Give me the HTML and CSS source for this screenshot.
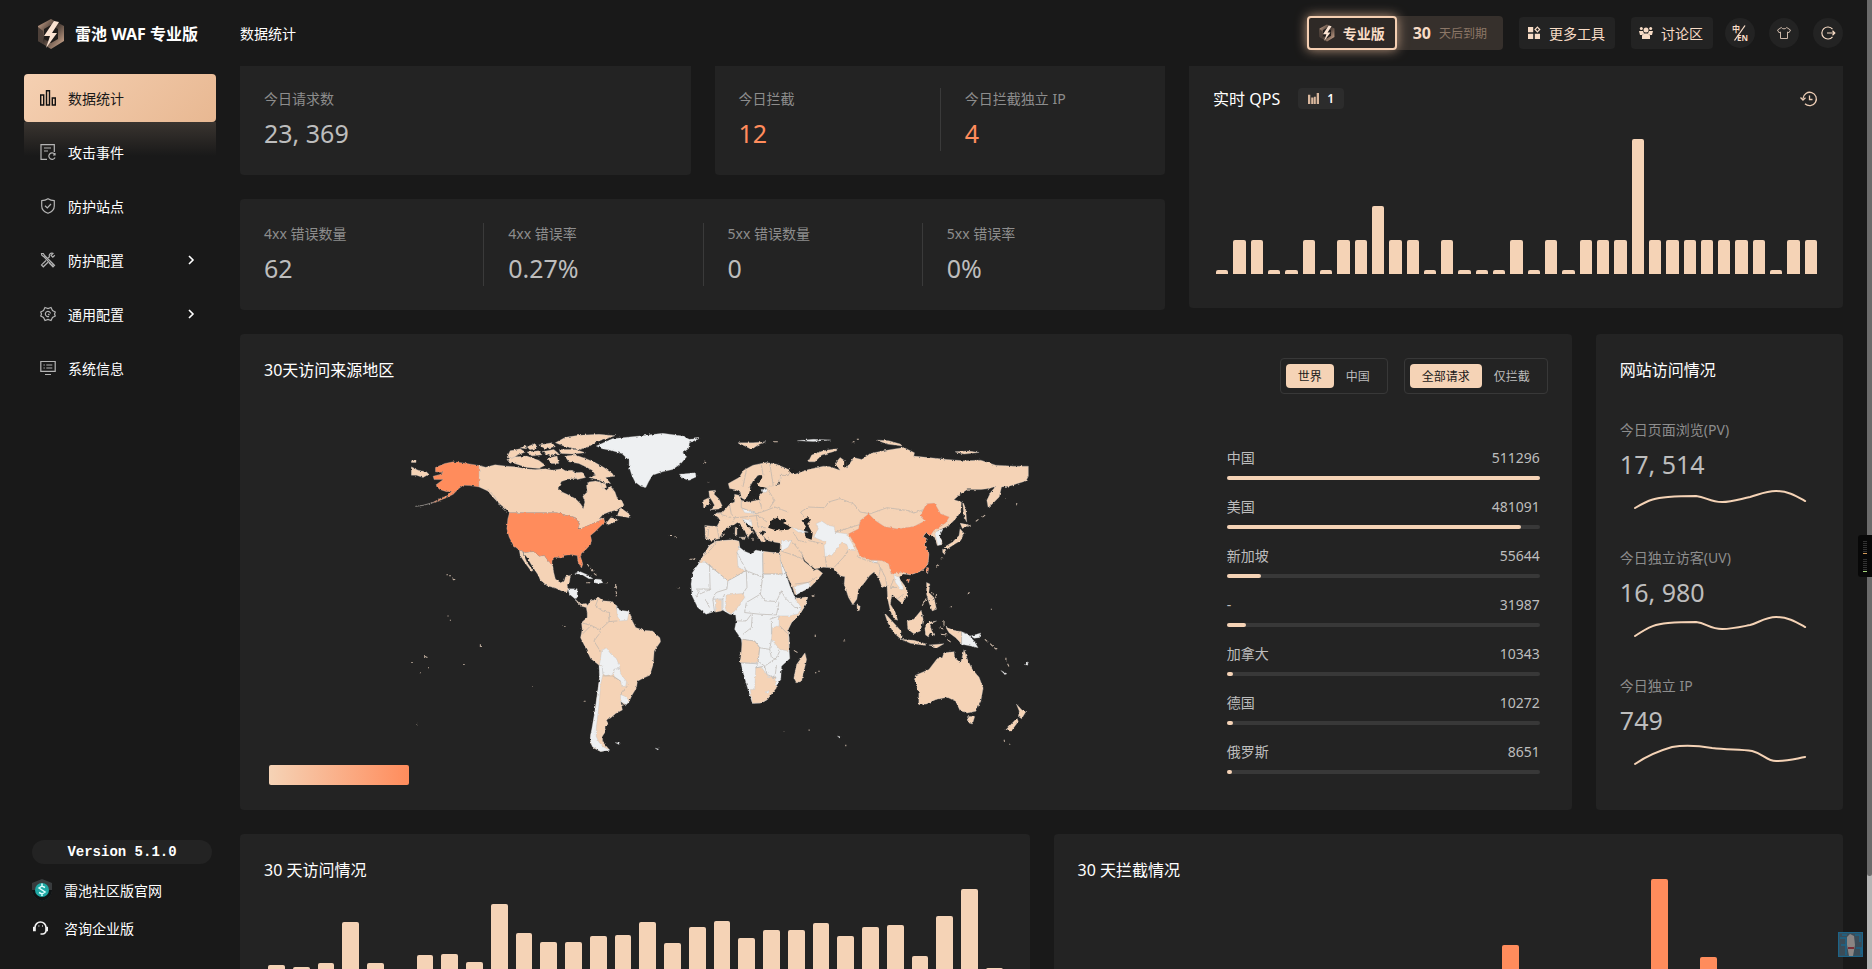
FILE: index.html
```html
<!DOCTYPE html>
<html lang="zh-CN">
<head>
<meta charset="utf-8">
<title>雷池 WAF 专业版</title>
<link rel="stylesheet" href="styles.css">
</head>
<body>
<svg class="defs" aria-hidden="true">
  <defs>
    <linearGradient id="metal" x1="0" y1="0" x2="1" y2="1">
      <stop offset="0" stop-color="#d9b096"/><stop offset=".45" stop-color="#3a302b"/><stop offset="1" stop-color="#e3b99d"/>
    </linearGradient>
    <symbol id="logo" viewBox="0 0 28 32">
      <path d="M14 1 27 8v15L14 31 1 23V8z" fill="url(#metal)"/>
      <path d="M14 7 21 11v10l-7 4-7-4V11z" fill="#211d1b"/>
      <path d="M1 9v14l5 3V13z" fill="#4d4039"/>
      <path d="M17 3 7 18h6L9 30l11-15h-5l7-11z" fill="#fbe3d2"/>
    </symbol>
    <symbol id="chevron" viewBox="0 0 8 10"><path d="M2 1l4 4-4 4" fill="none" stroke="#fff" stroke-width="1.6"/></symbol>
  </defs>
</svg>
<div class="app">
  <aside class="sidebar">
    <div class="brand"><svg class="brand-logo"><use href="#logo"/></svg><h1>雷池 WAF 专业版</h1></div>
    <nav class="nav">
      <a href="#stats" class="nav-item active">
        <svg viewBox="0 0 16 16"><path d="M.7 5h3v10h-3zM6.5.8h3v14.2h-3zM12.3 8h3v7h-3z"/></svg><span>数据统计</span></a>
      <a href="#events" class="nav-item">
        <svg viewBox="0 0 16 16"><path d="M7 15.3H1V.7h13.3V8M4 4h7M4 7h4M14.6 10.2a3.2 3.2 0 1 0 .4 3.2M15 9v2h-2"/></svg><span>攻击事件</span></a>
      <a href="#sites" class="nav-item">
        <svg viewBox="0 0 16 16"><path d="M8 .8c2 1.3 4 1.8 6.3 1.9V8c0 3.600-2.800 6-6.300 7.300C4.500 14 1.700 11.600 1.700 8V2.700C4 2.600 6 2.100 8 .8zM5 7.700l2.300 2.200L11 6"/></svg><span>防护站点</span></a>
      <a href="#rules" class="nav-item">
        <svg viewBox="0 0 16 16"><path d="M1.500 1.500l1.800 0 1.500 2.300 8.700 8.400-1.300 1.500-8.400-9-2-1.500zM14.800 3.200l-2 1.900-1.700-1.700 1.800-2C10.600.6 8.700 2.500 9.400 4.800l-2 2M6 8.500l-4.500 4.400 1.800 1.900L8 10.300M10.500 9.500l4 3.800-1.500 1.500-4-4"/></svg><span>防护配置</span><svg class="chev"><use href="#chevron"/></svg></a>
      <a href="#general" class="nav-item">
        <svg viewBox="0 0 16 16"><path d="M5 1.500l3 1 3-1 1.500 3L15.300 6 14.500 8l.8 2-2.800 1.500-1.500 3-3-1-3 1-1.500-3L.7 10l.8-2-.8-2 2.800-1.500z"/><path d="M10.500 7.500A2.600 2.600 0 1 0 9 10.400M8 8l1.500 1"/></svg><span>通用配置</span><svg class="chev"><use href="#chevron"/></svg></a>
      <a href="#system" class="nav-item">
        <svg viewBox="0 0 16 16"><path d="M.8 1.500h14.400v9.800H.8zM5 14.500h6M3.500 5h1.300M6.300 5h6M3.500 8h1.300M6.300 8h6"/></svg><span>系统信息</span></a>
    </nav>
    <div class="side-foot">
      <div class="version">Version 5.1.0</div>
      <a href="#home" class="foot-link">
        <svg viewBox="0 0 20 22"><path d="M10 0l10 4v7c0 5-4 9-10 11C4 20 0 16 0 11V4z" fill="#383b3d"/><path d="M10 22C4 20 0 16 0 11l20 0c0 5-4 9-10 11z" fill="#101314"/><circle cx="10" cy="11" r="7" fill="#1fa8a4"/><path d="M13 8.500 10 7 7 9l6 4-3 2-3-1.500M10 4.500V7M10 15v2" fill="none" stroke="#dff" stroke-width="1.500"/></svg><span>雷池社区版官网</span></a>
      <a href="#consult" class="foot-link">
        <svg viewBox="0 0 20 22"><path d="M3 10.500a5.500 5.500 0 0 1 11 0v2.500a3.500 3.500 0 0 1-4 4H8.500M3 10v3.500H1.800V10.500zM14 10v3.500h1.200V10.500zM6.500 9h.8M10 9h.8" fill="none" stroke="#f2f2f2" stroke-width="1.600"/></svg><span>咨询企业版</span></a>
    </div>
  </aside>

  <div class="page">
    <header class="topbar">
      <h2 class="crumb">数据统计</h2>
      <div class="tools">
        <div class="license">
          <button class="edition"><svg><use href="#logo"/></svg>专业版</button>
          <span class="expire"><b>30</b><span>天后到期</span></span>
        </div>
        <button class="tool"><svg viewBox="0 0 14 14"><path d="M1 1h5.200v5.200H1zM1 7.800h5.200V13H1zM7.800 7.800H13V13H7.800z" fill="#f8dcc6"/><path d="M10.400 1.200l2.300 2.300-2.300 2.300-2.300-2.300z" fill="none" stroke="#f8dcc6" stroke-width="1.200"/></svg>更多工具</button>
        <button class="tool"><svg viewBox="0 0 14 14" fill="#f8dcc6"><circle cx="7" cy="4" r="2.500"/><circle cx="2.300" cy="2.500" r="1.500"/><circle cx="11.700" cy="2.500" r="1.500"/><path d="M0 5h4l1 2.500-2 1.500H1zM14 5h-4L9 7.500l2 1.500h2zM3 13V9.500L5 7.500h4l2 2V13z"/></svg>讨论区</button>
        <div class="rounds">
          <button class="round" aria-label="语言"><svg viewBox="0 0 18 18"><text class="lang-zh" x="1" y="8">中</text><text class="lang-en" x="6" y="17">EN</text><path d="M14 1.500 3.500 16.500" stroke="#f8dcc6" stroke-width="1.300"/></svg></button>
          <button class="round" aria-label="主题"><svg viewBox="0 0 18 18"><path d="M6.300 3.500 2.500 6l1.500 2.700 1.500-.7v6.500h7V8l1.500.7L15.500 6l-3.800-2.500c-1 1.800-4.400 1.800-5.400 0z" fill="none" stroke="#cdb9aa"/></svg></button>
          <button class="round" aria-label="退出"><svg viewBox="0 0 18 18"><path d="M13.500 5.200a6 6 0 1 0 0 7.600M8 9h7.500M13.500 6.800 15.800 9l-2.300 2.200" fill="none" stroke="#f8dcc6" stroke-width="1.200"/></svg></button>
        </div>
      </div>
    </header>

    <main class="grid">
      <section class="overview">
        <div class="card top stats"><div class="stat"><h3>今日请求数</h3><p>23, 369</p></div></div>
        <div class="card top stats hot">
          <div class="stat"><h3>今日拦截</h3><p>12</p></div>
          <div class="stat"><h3>今日拦截独立 IP</h3><p>4</p></div>
        </div>
        <div class="card stats wide">
          <div class="stat"><h3>4xx 错误数量</h3><p>62</p></div>
          <div class="stat"><h3>4xx 错误率</h3><p>0.27%</p></div>
          <div class="stat"><h3>5xx 错误数量</h3><p>0</p></div>
          <div class="stat"><h3>5xx 错误率</h3><p>0%</p></div>
        </div>
      </section>

      <section class="card top qps">
        <div class="qps-head">
          <h3 class="title">实时 QPS</h3>
          <span class="chip"><svg viewBox="0 0 12 12"><path d="M0 2h2.500v10H0zM3.500 5H6v7H3.500zM6.500 4H8.500v8h-2zM9.500 0H12v12H9.500z" fill="#d9b79d"/></svg>1</span>
          <button class="history" aria-label="历史"><svg viewBox="0 0 20 20"><path d="M4 9.500a6.700 6.700 0 1 1 2 5.300M1.500 8.500l2.500 2.500L6.500 8.800M10.500 6.500v4h3" fill="none" stroke="#ecccb4" stroke-width="1.300"/></svg></button>
        </div>
        <div class="bars qps-bars" id="qps"></div>
      </section>

      <section class="card region">
        <div class="region-head">
          <h3 class="title">30天访问来源地区</h3>
          <div class="segment"><button class="on">世界</button><button>中国</button></div>
          <div class="segment"><button class="on">全部请求</button><button>仅拦截</button></div>
        </div>
        <div class="region-body">
          <figure class="map">
            <svg viewBox="36 36 1853 956" role="img" aria-label="世界地图">
              <filter id="coast" x="0" y="0" width="1" height="1"><feTurbulence type="fractalNoise" baseFrequency=".12" numOctaves="2" seed="4"/><feDisplacementMap in="SourceGraphic" scale="8" xChannelSelector="R" yChannelSelector="G"/></filter>
              <g filter="url(#coast)">
              <!-- Americas -->
              <g class="land">
                <path d="M242 136 262 141 290 134 325 138 350 140 380 146 410 148 440 146 462 150 490 146 500 152 520 150 540 162 535 175 510 176 488 184 478 205 490 215 505 222 530 235 545 250 553 262 558 245 552 228 565 215 563 195 570 185 590 182 605 186 612 200 622 210 635 198 648 215 655 235 668 240 675 255 655 268 630 275 612 282 600 296 615 290 615 300 600 302 580 310 545 325 538 322 542 310 530 292 500 284 478 277 333 277 325 268 305 252 288 235 268 212 242 200z"/>
                <path d="M665 262 678 272 690 280 690 292 672 288 655 286 660 272zM622 308 635 292 650 295 658 298 640 308 625 314z"/>
                <path d="M498 108 530 105 560 115 590 128 615 142 640 160 645 168 620 172 635 190 620 188 595 178 570 172 590 165 580 150 560 140 540 130 510 125z"/>
                <path d="M470 68 500 52 540 46 600 43 648 47 620 56 590 66 570 80 545 88 520 84 495 78zM325 118 350 110 385 108 420 120 440 135 420 145 385 142 355 132 330 124zM325 112 335 92 365 86 380 96 355 106 340 116zM385 80 410 70 415 84 395 90zM420 75 460 68 470 80 440 86zM430 95 465 88 480 100 455 108zM482 88 530 88 560 98 520 102 485 100zM446 114 475 108 480 130 458 130zM385 96 420 92 430 104 400 108zM365 84 382 76 384 86zM527 158 550 156 560 172 535 178zM605 188l14 2 4 12-12 4z"/>
                <path d="M362 388 380 396 405 393 422 407 437 405 448 420 462 432 465 455 470 475 485 486 497 480 500 468 515 463 512 485 505 492 508 505 505 514 492 512 470 502 445 495 425 478 418 462 400 435 385 410 372 395 385 425 403 450 398 452 378 425 365 405zM530 535 545 550 562 548 568 556 562 560 548 556 535 545z"/>
                <path d="M562 560 575 540 590 535 597 528 612 540 640 542 652 555 655 570 680 570 692 575 700 600 710 620 735 628 760 630 782 650 784 662 765 690 762 730 752 762 735 770 715 780 712 800 700 820 688 845 675 850 665 840 668 855 670 866 650 876 640 885 635 890 622 895 628 908 618 915 620 930 610 945 612 962 632 985 605 990 585 980 575 965 575 940 582 915 588 870 595 820 602 770 604 735 575 712 560 680 545 650 550 625 548 605 565 590 565 575z"/>
                <path d="M40 140 60 150 85 155 92 162 75 172 55 165 40 165zM40 122h14v5H40z"/>
              </g>
              <g class="hot-land">
                <path d="M112 142 140 130 165 125 200 129 242 136 242 200 215 196 195 195 182 205 165 222 145 232 120 242 97 250 125 235 150 225 160 212 145 214 125 208 112 195 125 185 135 178 108 178 105 168 125 163 135 158 112 155z"/>
                <path d="M333 277 478 277 500 284 530 292 542 310 538 325 545 325 580 310 600 302 612 290 618 305 600 322 590 332 575 345 578 360 575 372 560 388 548 398 545 408 552 430 548 442 538 425 535 405 515 402 495 405 490 412 470 410 460 420 460 432 448 420 437 405 422 407 405 393 380 396 362 388 345 375 332 350 325 325 328 295z"/>
              </g>
              <g class="none">
                <path d="M592 78 640 56 720 48 790 40 850 48 870 58 902 55 870 68 868 85 850 98 862 110 845 130 820 148 790 155 760 165 748 185 740 202 725 198 708 185 698 165 690 140 690 120 668 100 640 92 610 86zM840 162 865 160 888 158 890 170 868 180 850 174z"/>
                <path d="M507 504 535 504 535 530 530 535 512 520zM528 458 545 453 565 462 582 474 570 474 550 462zM588 475 605 476 612 486 598 488 588 486z"/>
                <path d="M600 732 610 735 612 760 605 790 602 830 598 870 592 920 592 945 600 962 612 975 632 986 605 990 580 975 574 950 580 915 588 870 595 820 602 770zM608 690 622 680 635 698 652 712 662 735 662 742 645 744 642 758 620 764 612 758 610 735 602 730zM645 745 662 742 665 758 682 780 680 795 668 796 665 780 645 765zM665 820 680 826 690 838 682 850 664 840zM652 553 662 568 690 572 685 598 662 600 655 585zM650 964h14l-4 5zM768 980l10 2-2 3z"/>
              </g>
              <path class="line" d="M597 535 590 555 610 570 632 575 630 602M548 605 580 615 600 625M604 690 585 660 600 640 605 625 630 602 655 600M612 764 640 764 665 780M688 790 665 820M550 640 575 615M268 206 290 230 300 252 325 276M52 258 75 255 100 248"/>
              <path class="specks" d="M145 462h4M153 465h5M163 474l5 4M565 430l6 8M575 442l8 10M585 458l8 6M650 490v14M652 512v14M492 613l8 4M620 486h6M565 486h6M78 705l10 4M246 670v8M40 724h4M195 730h4M65 755h3M90 740h4M402 796h3M556 840h4M56 908l5 4M812 345h6M826 348l6 4M870 416h20M833 500l8 2M148 585h3M155 598h3M915 125l5 4M925 186h4"/>

              <!-- Eurasia, Africa and Oceania -->
              <g transform="translate(840)">
                <g class="land">
                  <path d="M88 212 108 210 104 222 118 235 128 256 118 266 92 268 105 255 98 242 90 230zM72 240 88 232 90 252 72 262z"/>
                  <path d="M146 190 178 172 192 150 220 135 260 127 290 132 335 152 325 165 300 165 312 175 278 202 258 204 235 198 228 190 235 175 250 168 235 165 220 182 210 200 215 210 205 225 195 238 185 232 182 215 165 208 150 205z"/>
                  <path d="M76 315 112 318 122 300 115 290 102 285 112 278 130 275 150 252 165 245 165 222 178 225 185 240 205 245 240 238 240 222 262 205 258 202 300 192 302 165 325 165 330 158 345 162 385 148 430 138 450 140 480 150 465 130 480 112 498 125 500 145 520 112 545 118 570 100 610 92 670 82 702 98 700 108 800 118 850 122 900 120 945 135 1000 138 1042 138 1042 168 1035 182 1010 190 985 198 962 200 955 230 935 250 922 262 918 240 930 215 945 198 925 205 900 208 860 208 840 220 820 238 842 245 840 275 825 295 805 315 785 325 770 332 775 345 783 358 785 372 770 375 762 350 750 345 735 338 728 348 740 356 732 375 745 400 742 430 725 450 690 462 668 460 655 470 680 505 680 525 665 548 650 535 635 520 630 550 645 575 652 598 642 595 630 570 622 535 620 495 605 500 595 470 580 455 568 465 550 490 535 505 530 535 518 552 505 530 492 490 494 468 480 465 460 442 430 440 405 445 375 420 366 402 372 422 395 440 400 450 412 445 428 458 410 480 390 500 360 515 345 522 338 500 315 450 300 415 300 395 302 368 285 365 262 360 250 345 258 332 245 330 240 340 252 348 258 362 245 364 235 350 225 330 200 305 190 298 198 312 222 335 210 342 205 352 195 330 175 305 165 312 145 318 130 335 118 355 95 360 78 355zM530 552 540 556 538 568 532 570z"/>
                  <path d="M385 125 395 105 430 92 470 86 470 92 425 105 405 125zM175 68 220 68 258 65 240 72 215 88 200 80zM588 60 625 62 660 72 665 78 620 72zM820 95 860 93 895 97 850 102zM167 320l5 2v22l-6-2zM178 350h20l-4 8z"/>
                  <path d="M838 325 850 338 840 360 820 372 800 385 790 380 815 365 835 345zM838 308 865 314 845 324zM786 385 796 390 792 402 786 395zM845 240 855 265 858 305 850 290zM738 485 748 490 745 515 760 530 768 565 755 570 745 545 738 520z"/>
                  <path d="M612 575 635 600 662 630 662 655 640 635 622 605zM662 655 700 658 735 668 735 673 690 667zM680 600 700 595 722 568 728 595 720 630 700 638 682 625zM733 622 742 604 768 600 748 610 753 628 762 644 749 634 744 648 735 642zM795 618 820 628 843 632 843 670 825 650 805 635zM745 672 790 668 770 680z"/>
                  <path d="M702 775 705 762 745 745 770 712 785 710 790 695 820 692 822 710 840 725 850 685 862 720 875 745 895 768 907 800 900 840 885 870 860 875 838 868 825 840 800 828 765 835 738 848 715 850 715 815zM860 885 882 885 875 908 865 905zM1006 848 1022 865 1034 872 1022 892 1012 885 1015 870zM1008 890 1012 900 990 930 975 925z"/>
                </g>
                <path class="sea" d="M265 322 275 300 292 290 300 300 312 295 320 302 310 308 335 320 325 328 290 330zM365 300 385 290 393 298 382 310 398 340 395 358 378 352 372 328 378 318zM212 204 225 188 238 165 250 165 245 178 232 190 240 200 260 200 238 206 235 218 205 235zM328 146 350 152 345 160 330 158zM492 122 500 118 500 140 492 142z"/>
                <path class="none" d="M110 362 160 358 178 362 180 380 195 392 215 400 228 388 260 395 298 398 302 420 315 450 330 495 345 530 362 535 383 528 378 550 360 580 335 605 325 625 328 650 328 690 330 712 305 735 303 775 285 800 262 835 245 845 218 846 205 805 192 760 182 720 190 690 185 655 165 625 170 600 168 582 150 580 130 568 105 572 80 580 55 560 38 525 35 490 40 455 60 425 72 405 90 375z"/>
                <g class="land">
                  <path d="M110 362 160 358 178 362 180 378 172 395 175 440 200 450 145 480 78 425 60 425 72 405 90 375zM250 392 298 398 308 460 250 460zM140 522 190 518 195 530 170 565 155 580 138 568zM108 538H126V570L108 574z"/>
                  <path d="M345 533 383 528 378 550 358 582 335 605 325 625 328 690 300 685 275 655 278 620 298 615 298 585 330 585 355 578 365 560zM188 655 225 660 240 680 235 725 182 725zM218 846 212 805 225 805 228 740 245 738 265 765 285 770 290 800 262 835 245 845zM375 695 380 715 365 780 350 785 342 770 350 730z"/>
                </g>
                <g class="none">
                  <path d="M342 498 385 485 392 498 350 522zM305 362 335 360 325 380 305 392zM408 310 425 302 445 315 462 318 465 335 500 340 520 375 525 390 505 388 500 372 485 365 470 385 455 405 435 408 432 375 440 365 400 350 415 325zM188 265 215 272 230 280 195 277zM188 295 215 300 218 318 205 312zM335 320 385 335 355 335zM244 208 262 208 260 216 246 216zM762 335 788 325 777 345 783 372 772 374zM640 462 655 470 670 505 662 508 645 485zM578 420 592 420 590 426 578 426zM258 812 268 808 266 818z"/>
                  <path d="M843 632 862 640 880 660 892 680 870 675 843 670zM870 645 900 636 895 650 880 652zM352 62 400 58 452 60 400 64zM960 748 978 758 972 760zM1030 730 1042 722 1040 732zM472 944l10 2-2 4z"/>
                </g>
                <path class="hot-land" d="M505 340 535 325 540 300 565 280 585 300 612 318 650 325 700 318 735 300 720 285 728 268 738 250 762 248 780 280 806 290 795 308 780 318 760 330 750 345 735 338 728 348 740 356 732 375 745 400 742 430 725 450 690 462 668 455 632 460 625 430 605 420 570 418 540 408 530 385 520 365zM738 440 745 442 741 460zM677 478 688 475 684 487z"/>
                <path class="line" d="M362 275 385 260 435 262 445 245 480 235 520 250 540 275 570 280 620 262 680 270 700 278 728 268M362 275 372 290M465 335 520 318 540 312M340 335 355 360 380 365M335 360 370 405M330 400 370 415M345 490 385 485 410 470M305 392 330 400M385 360 430 370M435 408 440 440M462 440 490 410 505 388M530 408 560 420 595 428M595 470 600 445 595 428M620 495 615 470 600 440M630 500 650 500M650 535 670 520M640 475 630 500M150 252 155 280 165 292 190 290 235 285M185 240 185 262 230 280 260 270 285 260 325 275M240 238 245 262M262 205 285 240 270 262M165 292 160 305M112 318 118 350M88 320 85 355M112 278 155 292M230 285 235 320 258 322M200 150 190 200M245 135 250 165M270 128 280 195M235 285 262 305"/>
                <path class="line" d="M90 430 92 505 50 505M78 425 145 480 142 505 110 515 100 535 130 535M145 480 200 450 202 500 190 518M172 395 200 450M200 450 250 470 248 395M250 460 242 520 200 545 195 575M250 460H310M242 520 255 540 290 542 305 510M305 510 315 530 345 560 362 560M195 575 240 580 290 582 298 542M168 600 200 600 215 580M190 640 215 620 218 580M190 655 225 660 240 680 270 685 275 655M275 600 275 640M298 585 270 595M240 680 235 720 255 735 290 710 300 690M270 685 275 710 290 715M182 725 235 728 228 740M228 740 255 735 262 760 285 770 290 735M60 510 50 530M78 535 90 560M100 535 105 572M130 535 130 568M135 520 130 535M95 505 60 520M325 640 300 615M112 362 95 385 75 405"/>
                <path class="specks" d="M860 318l10-4M885 303l8-6M905 290l8-6M970 236h4M1005 250h4M785 410l-4 6M775 432l-8 8M752 515l8 6M750 530l6 10M768 520l-3 12M725 555l12-22M790 600v14M775 620l14 4M780 640l20 2M800 655l10 8M912 655l10 8M928 668l8 8M940 680l8 6M975 710v8M980 728l4 8M280 65h14M515 65h8M530 58h6M405 755h4M415 750h4M312 930h3M386 926h3M497 970v4M970 955v4M985 968h3M342 688l10 6M395 525h8M810 558h4M862 520l4-6M930 565h3M490 660h5M404 643h4M125 350l10-10M265 348l4 12M220 352v10"/>
              </g>
              </g>
            </svg>
            <div class="legend"></div>
          </figure>
          <ul class="rank">
            <li><span>中国</span><span>511296</span><div class="track"><i style="width:100%"></i></div></li>
            <li><span>美国</span><span>481091</span><div class="track"><i style="width:94%"></i></div></li>
            <li><span>新加坡</span><span>55644</span><div class="track"><i style="width:11%"></i></div></li>
            <li><span>-</span><span>31987</span><div class="track"><i style="width:6%"></i></div></li>
            <li><span>加拿大</span><span>10343</span><div class="track"><i style="width:2%"></i></div></li>
            <li><span>德国</span><span>10272</span><div class="track"><i style="width:2%"></i></div></li>
            <li><span>俄罗斯</span><span>8651</span><div class="track"><i style="width:1.6%"></i></div></li>
          </ul>
        </div>
      </section>

      <section class="card visits">
        <h3 class="title">网站访问情况</h3>
        <div class="stat"><h3>今日页面浏览(PV)</h3><p>17, 514</p>
          <svg viewBox="0 0 199 28"><path d="M15 22C30 13 36 12 48 11 60 10 66 10 76 10 86 11 90 16 102 16 112 16 120 13 130 11 138 9 145 5 156 5 168 5 176 10 185 15"/></svg></div>
        <div class="stat"><h3>今日独立访客(UV)</h3><p>16, 980</p>
          <svg viewBox="0 0 199 28"><path d="M15 22C30 12 36 10 48 9 60 8 66 8 76 8 86 9 90 15 102 15 112 15 120 13 130 11 138 9 145 3 156 3 168 3 176 8 185 13"/></svg></div>
        <div class="stat"><h3>今日独立 IP</h3><p>749</p>
          <svg viewBox="0 0 199 28"><path d="M15 22C28 13 38 9 52 5 64 3 80 4 92 6 108 8 120 7 132 9 144 12 146 19 156 19 168 19 174 17 185 15"/></svg></div>
      </section>

      <section class="card half"><h3 class="title">30 天访问情况</h3><div class="bars day-bars" id="visits"></div></section>
      <section class="card half"><h3 class="title">30 天拦截情况</h3><div class="bars day-bars blocked" id="blocked"></div></section>
    </main>
  </div>
</div>
<div class="scrollbar"><i></i></div>
<div class="meter"><i></i><i class="up"></i><i></i><i class="down"></i></div>
<div class="pet"><svg viewBox="0 0 25 25"><path d="M0 0h25v25H0z" fill="#3a4c58"/><path d="M.5.5h24v24H.5zM2 6h6v17M3 13h5M17 3h5v7M18 16h5v7M4 3h5" fill="none" stroke="#1d6488" stroke-width="1.500"/><path d="M9 5l3-3 4 2 1 9-2 11h-4L9 13z" fill="#8a8583"/><path d="M10 15h6v2h-6z" fill="#7a2e36"/></svg></div>
<script src="charts.js"></script>
</body>
</html>
```
FILE: styles.css
```css
* { box-sizing: border-box; }
body {
  margin: 0; height: 100vh; overflow: hidden; background: #191919; color: #fff;
  font: 14px/21px "Noto Sans", "Noto Sans CJK SC", sans-serif;
}
h1, h2, h3, p, ul, figure { margin: 0; padding: 0; font-weight: 400; }
ul { list-style: none; }
a { color: inherit; text-decoration: none; }
button { border: 0; padding: 0; background: none; color: inherit; font: inherit; display: flex; align-items: center; }
.defs { position: absolute; width: 0; height: 0; }
.app { display: flex; height: 100vh; overflow: hidden; }

.sidebar { width: 240px; flex: none; padding: 0 24px; display: flex; flex-direction: column; }
.brand { display: flex; align-items: center; gap: 10px; height: 74px; padding: 0 0 6px 13px; white-space: nowrap; }
.brand-logo { width: 28px; height: 32px; flex: none; }
.brand h1 { font-size: 16px; line-height: 24px; font-weight: 700; }
.nav { display: flex; flex-direction: column; gap: 6px; }
.nav-item { display: flex; align-items: center; gap: 12px; height: 48px; padding: 0 21px 0 16px; border-radius: 4px; position: relative; }
.nav-item > svg:first-child { width: 16px; height: 16px; fill: none; stroke: #b4b4b4; stroke-width: 1.2; }
.nav-item .chev { width: 8px; height: 10px; margin-left: auto; }
.nav-item.active { color: #191919; background: linear-gradient(135deg, #f5d0b2, #e8b892); }
.nav-item.active > svg:first-child { stroke: #111; stroke-width: 1.4; }
.nav-item.active::after {
  content: ""; position: absolute; left: 0; right: 0; top: 48px; height: 34px;
  background: linear-gradient(rgba(245, 208, 178, .15), rgba(245, 208, 178, 0));
}
.side-foot { margin-top: auto; padding-bottom: 30px; }
.version {
  height: 24px; margin: 0 4px 0 8px; border-radius: 12px; background: #232323; text-align: center;
  font: 700 14px/24px "Liberation Mono", monospace;
}
.foot-link { display: flex; align-items: center; gap: 12px; margin: 15px 0 0 8px; height: 22px; }
.foot-link + .foot-link { margin-top: 16px; }
.foot-link svg { width: 20px; height: 22px; }

.page { flex: 1; min-width: 0; padding-right: 29px; }
.topbar { height: 66px; display: flex; align-items: center; justify-content: space-between; }
.crumb { font-size: 14px; }
.tools { display: flex; align-items: center; gap: 16px; color: #f8dcc6; }
.license { display: flex; height: 34px; background: #36302c; border-radius: 4px; }
.edition {
  gap: 8px; padding: 0 10px; font-weight: 700; border: 2px solid #f5cfb2; border-radius: 4px;
  background: #2e2926; box-shadow: 0 0 12px rgba(255, 205, 170, .7);
}
.edition svg { width: 16px; height: 20px; }
.expire { display: flex; align-items: center; gap: 8px; padding: 0 16px; color: #8c7767; font-size: 12px; }
.expire b { font-size: 16px; color: #f8dcc6; }
.tool { height: 32px; gap: 8px; padding: 0 10px 0 8px; background: #232323; border-radius: 4px; }
.tool svg { width: 14px; height: 14px; }
.rounds { display: flex; gap: 14px; margin-left: -4px; }
.round { width: 30px; height: 30px; justify-content: center; border-radius: 50%; background: #232323; }
.round svg { width: 18px; height: 18px; }
.lang-zh, .lang-en { font-size: 8px; font-weight: 700; fill: #f8dcc6; }

.grid { display: grid; grid-template-columns: repeat(12, 1fr); gap: 24px; align-items: start; }
.card { background: #232323; border-radius: 4px; padding: 24px; min-width: 0; }
.card.top { padding-top: 22px; border-radius: 0 0 4px 4px; }
.title { font-size: 16px; line-height: 24px; }
.overview { grid-column: span 7; display: grid; grid-template-columns: 1fr 1fr; gap: 24px; }
.wide { grid-column: span 2; }
.stats { display: grid; grid-auto-flow: column; grid-auto-columns: 1fr; }
.stats .stat + .stat { border-left: 1px solid #3a3a3a; padding-left: 24px; }
.stat h3 { font-size: 14px; line-height: 21px; color: #8d8d8d; }
.stat p { font-size: 25px; line-height: 36px; padding-top: 6px; color: #bdbdbd; }
.hot p { color: #ff8c5c; }

.qps { grid-column: span 5; }
.qps.card { padding-bottom: 34px; }
.qps-head { display: flex; align-items: center; height: 21px; }
.chip { display: flex; align-items: center; gap: 8px; height: 21px; margin-left: 18px; padding: 0 10px; background: #2c2c2c; border-radius: 4px; font-size: 12px; font-weight: 600; }
.chip svg { width: 11px; height: 11px; }
.history { margin-left: auto; }
.history svg { width: 20px; height: 20px; }
.bars { display: flex; align-items: flex-end; }
.bars i { flex: 1; background: #f5d3b6; border-radius: 2px 2px 0 0; }
.qps-bars { height: 165px; gap: 5px; padding: 0 2px 0 3px; }

.region { grid-column: span 10; }
.region-head { display: flex; gap: 16px; height: 36px; }
.region-head .title { margin-right: auto; }
.segment { display: flex; padding: 5px; border: 1px solid #383838; border-radius: 4px; }
.segment button { height: 24px; padding: 0 12px; border-radius: 4px; font-size: 12px; color: #bdbdbd; }
.segment .on { background: #f5d3b6; color: #191919; }
.region-body { display: flex; gap: 50px; height: 392px; }
.map { flex: 1; display: flex; flex-direction: column; padding-top: 38px; }
.map svg { width: 68%; align-self: center; display: block; }
.land, .none, .hot-land { stroke: #bcbcbc; stroke-width: 1; }
.land { fill: #f5d3b6; }
.hot-land { fill: #ff8c5c; }
.none { fill: #eef0f2; }
.sea { fill: #232323; }
.line { fill: none; stroke: #b9b3ad; stroke-width: 2; }
.specks { fill: none; stroke: #cdb9a8; stroke-width: 3; }
.legend { width: 140px; height: 20px; margin: auto 0 1px 5px; border-radius: 2px; background: linear-gradient(90deg, #f5d3b6, #ff8c5c); }
.rank { width: 313px; margin: 53px 8px 0 0; display: flex; flex-direction: column; gap: 16px; color: #bdbdbd; }
.rank li { display: flex; flex-wrap: wrap; justify-content: space-between; row-gap: 8px; }
.track { width: 100%; height: 4px; border-radius: 2px; background: #383838; }
.track i { display: block; height: 4px; border-radius: 2px; background: #f5d3b6; }

.visits { grid-column: span 2; align-self: stretch; }
.visits .title { margin-bottom: 37px; }
.visits .stat + .stat { margin-top: 33px; }
.visits .stat svg { display: block; width: 100%; margin-top: 4px; fill: none; stroke: #f5d3b6; stroke-width: 2; stroke-linecap: round; }

.half { grid-column: span 6; }
.day-bars { height: 168px; gap: 8px; padding: 0 3px 0 4px; }
.blocked i { background: #ff8c5c; }

.scrollbar { position: absolute; right: 0; top: 0; width: 5px; height: 100vh; background: #b5b5b5; }
.scrollbar i { display: block; height: 876px; background: #6b6b6b; border-radius: 0 0 3px 3px; }
.meter { position: absolute; right: 0; top: 535px; width: 14px; height: 42px; padding: 6px 5px; background: #080808; border-radius: 3px 0 0 3px; }
.meter i { display: block; width: 4px; height: 12px; background: repeating-linear-gradient(#333 0 1px, transparent 1px 2px); }
.meter .up { height: 1px; margin-bottom: 5px; background: #d39a5a; }
.meter .down { height: 1px; background: #a5d67c; }
.pet { position: absolute; right: 9px; bottom: 12px; width: 25px; height: 25px; }
.pet svg { display: block; }
```
FILE: charts.js
```js
function draw(id, heights) {
  document.getElementById(id).innerHTML = heights
    .map(function (h) { return '<i style="height:' + h + 'px"></i>'; }).join('');
}
var qps = '01100101121101000101011141111111011';
draw('qps', qps.split('').map(function (n) { return n === '0' ? 4 : Math.round(n * 33.75); }));
draw('visits', [85, 83, 87, 128, 87, 70, 95, 96, 88, 146, 117, 108, 108, 114, 115, 128, 107, 123, 129, 112, 120, 120, 127, 114, 123, 125, 94, 134, 161, 82]);
var blocked = new Array(30).fill(0);
blocked[17] = 105;
blocked[23] = 171;
blocked[25] = 93;
draw('blocked', blocked);
```
